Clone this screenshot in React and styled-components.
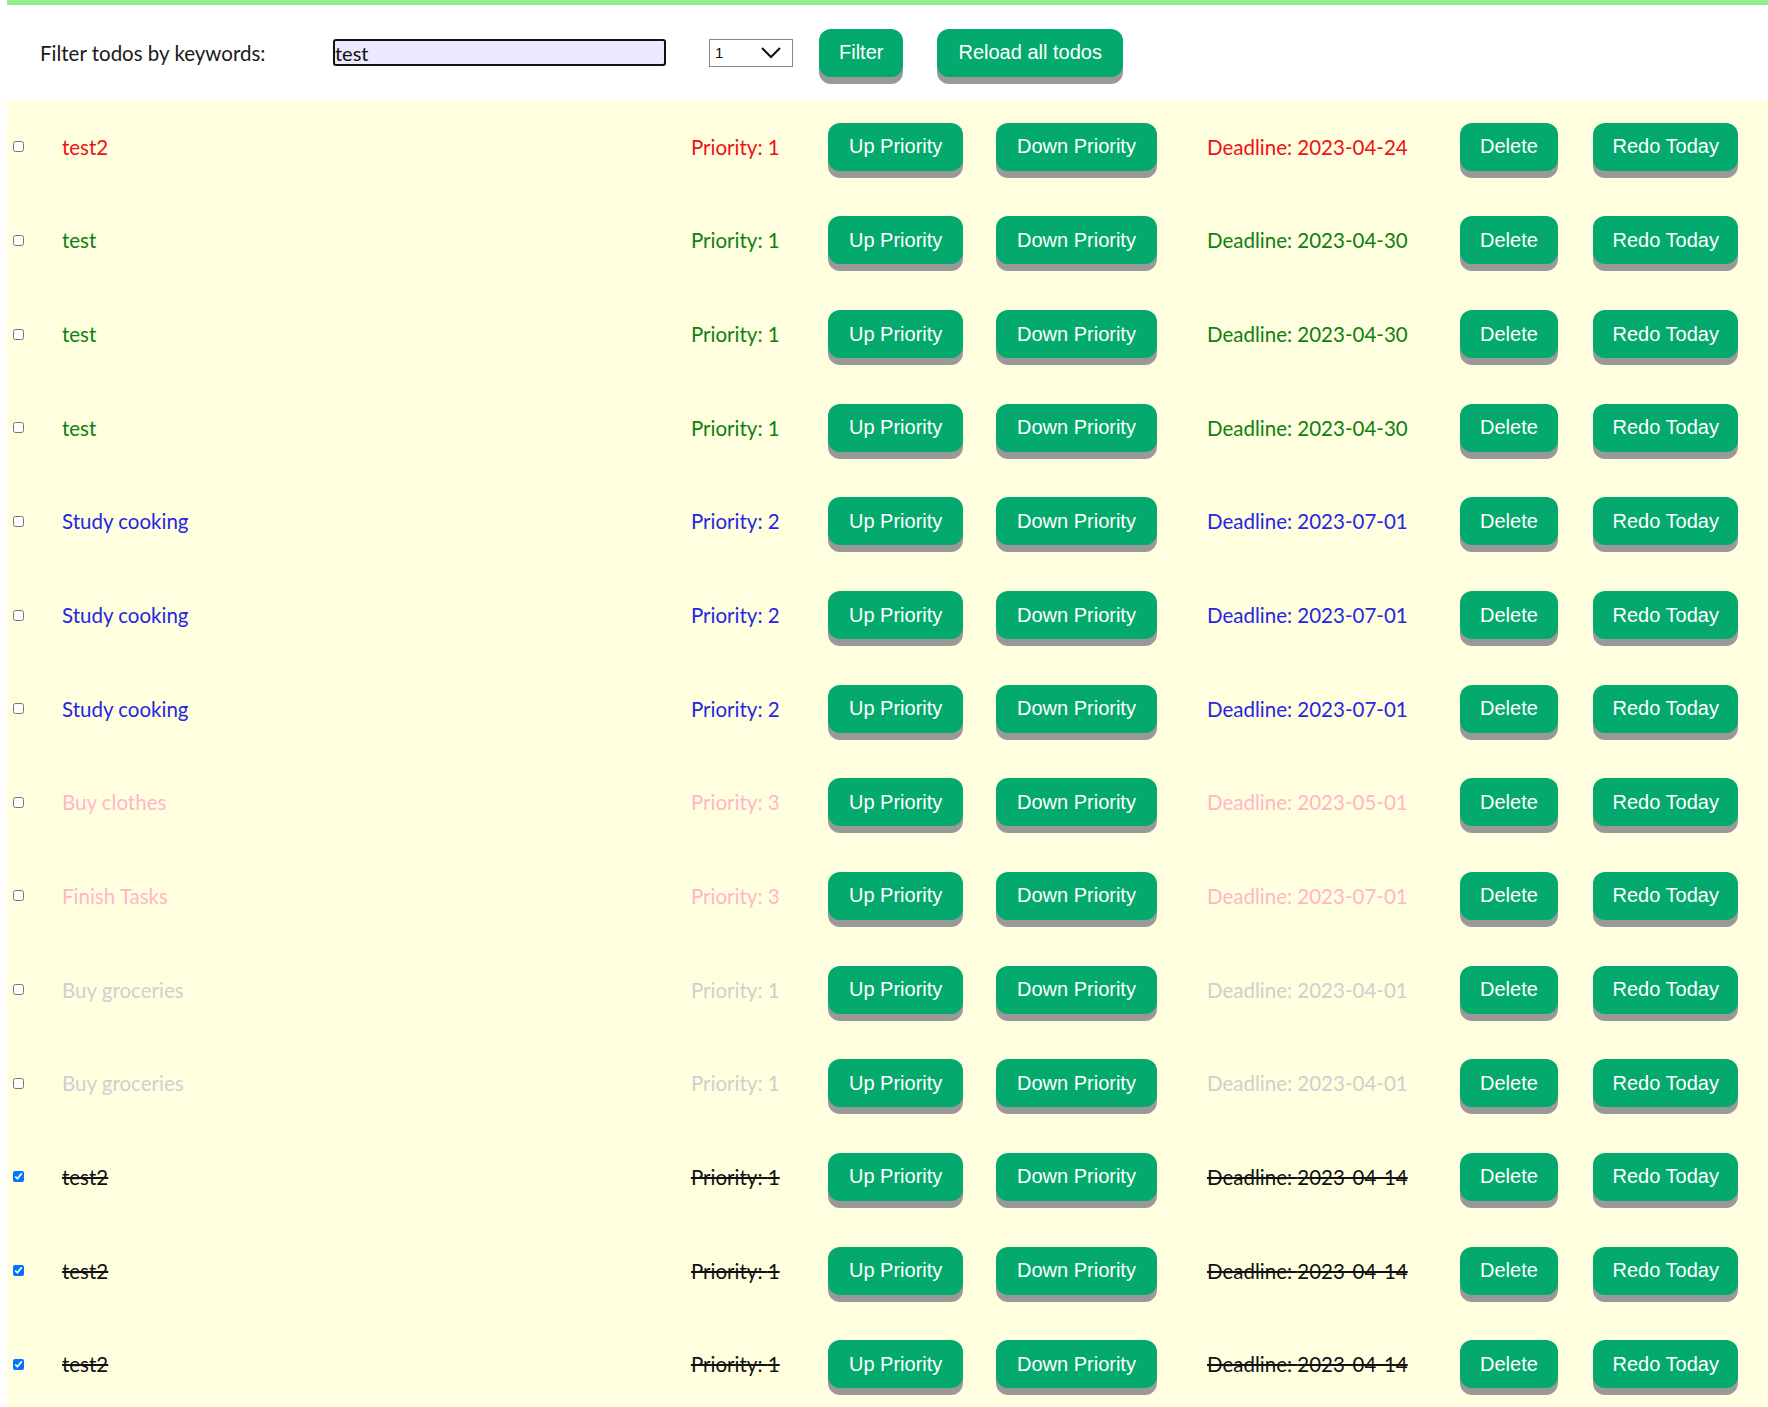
import React from "react";
import styled, { createGlobalStyle } from "styled-components";

const Global = createGlobalStyle`
  html, body { margin: 0; padding: 0; background: #fff; }
  body { font-family: Lato, "Noto Sans", sans-serif; overflow: hidden; }
`;

const Page = styled.div`
  margin-left: 7px;
  border-top: 5px solid #90ee90;
`;

const Header = styled.div`
  display: flex;
  align-items: center;
  height: 95px;
  padding-left: 33px;
`;

const Label = styled.span`
  font-size: 20.5px;
  color: #1a1a1a;
  width: 293px;
`;

const SearchInput = styled.input`
  box-sizing: border-box;
  width: 333px;
  height: 27px;
  border: 2px solid #111;
  border-radius: 3px;
  background: #ece8ff;
  padding: 0;
  font-family: Lato, sans-serif;
  font-size: 20px;
  color: #111;
  outline: none;
`;

const SelectBox = styled.div`
  box-sizing: border-box;
  width: 84px;
  height: 28px;
  margin-left: 43px;
  border: 1px solid #8a8a8a;
  background: #fff;
  display: flex;
  align-items: center;
  justify-content: space-between;
  padding: 0 10px 0 5px;
  font-family: "Liberation Sans", Arial, sans-serif;
  font-size: 15px;
  color: #111;
`;

const Button = styled.button`
  height: 48px;
  margin-left: ${(p) => p.$ml || 0}px;
  padding: 0 ${(p) => p.$px || 21}px;
  border: none;
  border-radius: 12px;
  background: #04aa6d;
  color: #fff;
  font-family: "Liberation Sans", Arial, sans-serif;
  font-size: 20px;
  box-shadow: 0 7px #999;
  cursor: pointer;
  white-space: nowrap;
  justify-self: start;
`;

const List = styled.div`
  background: #ffffe0;
  min-height: 1320px;
`;

const Row = styled.div`
  display: grid;
  grid-template-columns: 55px 629px 137px 168px 211px 253px 133px auto;
  align-items: center;
  height: 93.65px;
`;

const Check = styled.input`
  margin: 0 0 0 6px;
  width: 11px;
  height: 11px;
`;

const Cell = styled.span`
  font-size: 20.5px;
  color: ${(p) => (p.$done ? "#111" : p.$color)};
  text-decoration: ${(p) => (p.$done ? "line-through" : "none")};
  white-space: nowrap;
`;

const Chevron = () => (
  <svg width="22" height="13" viewBox="0 0 22 13">
    <path d="M2 2 L11 11 L20 2" fill="none" stroke="#111" strokeWidth="2" />
  </svg>
);

const todos = [
  { t: "test2", p: 1, d: "2023-04-24", c: "#ee1111" },
  { t: "test", p: 1, d: "2023-04-30", c: "#0e800e" },
  { t: "test", p: 1, d: "2023-04-30", c: "#0e800e" },
  { t: "test", p: 1, d: "2023-04-30", c: "#0e800e" },
  { t: "Study cooking", p: 2, d: "2023-07-01", c: "#2626e0" },
  { t: "Study cooking", p: 2, d: "2023-07-01", c: "#2626e0" },
  { t: "Study cooking", p: 2, d: "2023-07-01", c: "#2626e0" },
  { t: "Buy clothes", p: 3, d: "2023-05-01", c: "#ffb6c6" },
  { t: "Finish Tasks", p: 3, d: "2023-07-01", c: "#ffb6c6" },
  { t: "Buy groceries", p: 1, d: "2023-04-01", c: "#cfcfcf" },
  { t: "Buy groceries", p: 1, d: "2023-04-01", c: "#cfcfcf" },
  { t: "test2", p: 1, d: "2023-04-14", c: "#111", done: true },
  { t: "test2", p: 1, d: "2023-04-14", c: "#111", done: true },
  { t: "test2", p: 1, d: "2023-04-14", c: "#111", done: true },
];

export default function App() {
  return (
    <>
      <Global />
      <Page>
        <Header>
          <Label>Filter todos by keywords:</Label>
          <SearchInput defaultValue="test" />
          <SelectBox>
            <span>1</span>
            <Chevron />
          </SelectBox>
          <Button $ml={26} $px={20}>Filter</Button>
          <Button $ml={34}>Reload all todos</Button>
        </Header>
        <List>
          {todos.map((x, i) => (
            <Row key={i}>
              <Check type="checkbox" defaultChecked={!!x.done} />
              <Cell $color={x.c} $done={x.done}>{x.t}</Cell>
              <Cell $color={x.c} $done={x.done}>Priority: {x.p}</Cell>
              <Button>Up Priority</Button>
              <Button>Down Priority</Button>
              <Cell $color={x.c} $done={x.done}>Deadline: {x.d}</Cell>
              <Button $px={20}>Delete</Button>
              <Button $px={19.5}>Redo Today</Button>
            </Row>
          ))}
        </List>
      </Page>
    </>
  );
}
